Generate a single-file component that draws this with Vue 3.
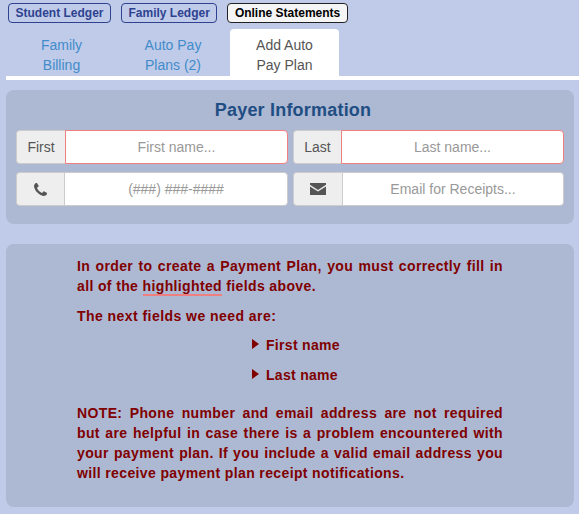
<template>
  <div class="page">
    <div class="ledger-buttons">
      <button class="ledger-btn">Student Ledger</button>
      <button class="ledger-btn">Family Ledger</button>
      <button class="ledger-btn current">Online Statements</button>
    </div>

    <ul class="tabs">
      <li v-for="tab in tabs" :key="tab.label" class="tab" :class="{ active: tab.active }">
        <a>{{ tab.label }}</a>
      </li>
    </ul>

    <section class="panel payer">
      <h3>Payer Information</h3>
      <div class="field-grid">
        <div class="input-group required">
          <span class="addon wide">First</span>
          <input type="text" placeholder="First name..." />
        </div>
        <div class="input-group required">
          <span class="addon">Last</span>
          <input type="text" placeholder="Last name..." />
        </div>
        <div class="input-group">
          <span class="addon">
            <svg class="icon" width="13" height="13" viewBox="0 0 1408 1408">
              <path d="M1408 1112q0 27-10 70.500t-21 68.500q-21 50-122 106-94 51-186 51-27 0-53-3.500t-57.500-12.500-47-14.500-55.500-20.500-49-18q-98-35-175-83-127-79-264-216t-216-264q-48-77-83-175-3-9-18-49t-20.500-55.500-14.500-47-12.500-57.500-3.500-53q0-92 51-186 56-101 106-122 25-11 68.500-21t70.500-10q14 0 21 3 18 6 53 76 11 19 30 54t35 63.500 31 53.500q3 4 17.500 25t21.500 35.500 7 28.500q0 20-28.500 50t-62 55-62 53-28.500 46q0 9 5 22.500t8.500 20.500 14 24 11.500 19q76 137 174 235t235 174q2 1 19 11.500t24 14 20.500 8.500 22.500 5q18 0 46-28.500t53-62 55-62 50-28.500q14 0 28.500 7t35.500 21.500 25 17.500q25 15 53.500 31t63.500 35 54 30q70 35 76 53 3 7 3 21z" />
            </svg>
          </span>
          <input type="text" placeholder="(###) ###-####" />
        </div>
        <div class="input-group">
          <span class="addon wide">
            <svg class="icon mail" width="16" height="12" viewBox="0 0 16 12">
              <path d="M0 0h16v1.800L8 6.900 0 1.800Z" />
              <path d="M0 3.400 8 8.500l8-5.100V12H0Z" />
            </svg>
          </span>
          <input type="text" placeholder="Email for Receipts..." />
        </div>
      </div>
    </section>

    <section class="panel notice">
      <p class="justified">
        In order to create a Payment Plan, you must correctly fill in all of the
        <span class="marked">highlighted</span> fields above.
      </p>
      <p class="next">The next fields we need are:</p>
      <ul class="needed">
        <li v-for="name in neededFields" :key="name">
          <span class="arrow"></span>{{ name }}
        </li>
      </ul>
      <p class="justified note">
        NOTE: Phone number and email address are not required but are helpful in case there is a
        problem encountered with your payment plan. If you include a valid email address you will
        receive payment plan receipt notifications.
      </p>
    </section>
  </div>
</template>

<script setup>
const tabs = [
  { label: 'Family Billing' },
  { label: 'Auto Pay Plans (2)' },
  { label: 'Add Auto Pay Plan', active: true }
];

const neededFields = ['First name', 'Last name'];
</script>

<style>
html,
body {
  margin: 0;
  background: #bfcbe9;
}
</style>

<style scoped>
.page {
  width: 579px;
  height: 514px;
  overflow: hidden;
  box-sizing: border-box;
  padding-top: 3px;
  font-family: "Liberation Sans", Arial, sans-serif;
  background: #bfcbe9;
}

.ledger-buttons {
  display: flex;
  gap: 10px;
  padding-left: 8px;
  height: 20px;
}

.ledger-btn {
  height: 20px;
  padding: 0 6.5px;
  border: 1px solid #2e4290;
  border-radius: 4px;
  background: transparent;
  color: #2e4290;
  font-family: inherit;
  font-size: 12px;
  font-weight: bold;
  line-height: 18px;
}

.ledger-btn.current {
  border-color: #222;
  background: #f5f5f5;
  color: #000;
}

.tabs {
  display: flex;
  gap: 2.5px;
  list-style: none;
  margin: 6px 0 0 6px;
  padding: 0 0 0 1px;
  height: 47px;
  border-bottom: 4px solid #fff;
}

.tab {
  width: 109px;
  box-sizing: border-box;
  padding: 6px 15px 0;
  color: #428bca;
  font-size: 14px;
  line-height: 20px;
  text-align: center;
}

.tab.active {
  height: 48px;
  border-radius: 4px 4px 0 0;
  background: #fff;
  color: #555;
}

.panel {
  box-sizing: border-box;
  width: 568px;
  margin-left: 6px;
  border-radius: 8px;
  background: #adb8d3;
}

.payer {
  height: 134px;
  margin-top: 10px;
  padding: 10px 10px 0;
}

.payer h3 {
  margin: 0 0 9px;
  padding-left: 6px;
  color: #1f4e83;
  font-size: 18px;
  font-weight: bold;
  line-height: 21px;
  letter-spacing: 0.2px;
  text-align: center;
}

.field-grid {
  display: grid;
  grid-template-columns: 272px 271px;
  column-gap: 5px;
  row-gap: 8px;
}

.input-group {
  display: flex;
  height: 34px;
}

.addon {
  display: flex;
  align-items: center;
  justify-content: center;
  box-sizing: border-box;
  width: 48px;
  flex: none;
  border: 1px solid #ccc;
  border-right: 0;
  border-radius: 4px 0 0 4px;
  background: #eee;
  color: #555;
  font-size: 14px;
}

.addon.wide {
  width: 49px;
}

.input-group input {
  flex: 1;
  min-width: 0;
  box-sizing: border-box;
  padding: 6px 12px;
  border: 1px solid #ccc;
  border-radius: 0 4px 4px 0;
  outline: none;
  background: #fff;
  color: #555;
  font-family: inherit;
  font-size: 14px;
  text-align: center;
}

.input-group input::placeholder {
  color: #999;
  opacity: 1;
}

.input-group.required input {
  border-color: #f08080;
}

.icon {
  fill: #555;
  display: block;
}

.icon.mail {
  margin-right: 1px;
}

.notice {
  height: 263px;
  margin-top: 20px;
  padding: 12px 71px 0;
  color: #800000;
  font-size: 14px;
  font-weight: bold;
  line-height: 20px;
  letter-spacing: 0.37px;
}

.notice p {
  margin: 0;
}

.justified {
  text-align: justify;
}

.marked {
  border-bottom: 2px solid #f08080;
}

.next {
  margin-top: 10px !important;
  letter-spacing: 0.45px;
}

.needed {
  list-style: none;
  margin: 9px 0 0;
  padding: 0 0 0 175px;
  letter-spacing: 0.3px;
}

.needed li {
  height: 30px;
  line-height: 20px;
}

.arrow {
  display: inline-block;
  width: 0;
  height: 0;
  margin-right: 7px;
  border-left: 7px solid #800000;
  border-top: 5px solid transparent;
  border-bottom: 5px solid transparent;
  vertical-align: 1px;
}

.note {
  margin-top: 8px !important;
}
</style>
